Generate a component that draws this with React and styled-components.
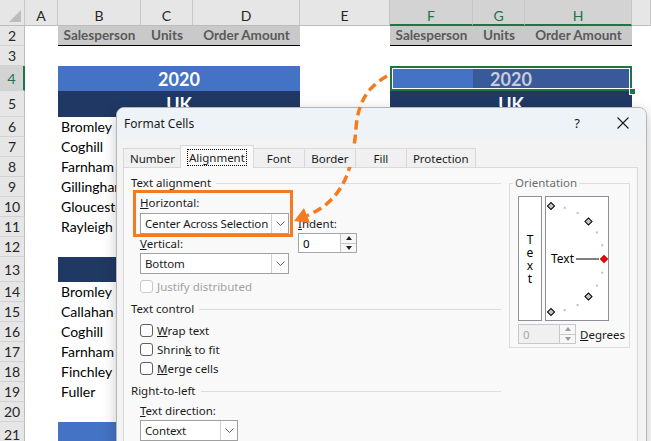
import React from 'react'
import styled, { createGlobalStyle, css } from 'styled-components'

const ORANGE = '#f47b20'
const GREEN = '#217346'

const GlobalStyle = createGlobalStyle`
  html, body { margin: 0; padding: 0; background: #fff; }
  body { width: 651px; height: 441px; overflow: hidden; }
`

const Page = styled.div`
  position: relative;
  width: 651px;
  height: 441px;
  overflow: hidden;
  background: #fff;
`

/* ---------- spreadsheet ---------- */

const Sheet = styled.div`
  display: grid;
  grid-template-columns: 25px 33px 83px 52px 107px 90px 83px 52px 107px 1fr;
  grid-template-rows: 26px 20px 20px 25px 26px repeat(6, 20px) 20px 25px repeat(7, 20px) 26px;
  font-family: Lato, "Liberation Sans", sans-serif;
  font-size: 14px;
  color: #000;
`

const Corner = styled.div`
  position: relative;
  background: #e6e6e6;
  border-right: 1px solid #c6c6c6;
  border-bottom: 1px solid #bdbdbd;
  &::after {
    content: '';
    position: absolute;
    right: 3px;
    bottom: 3px;
    border-style: solid;
    border-width: 0 0 12px 12px;
    border-color: transparent transparent #bcbcbc transparent;
  }
`

const ColHead = styled.div`
  box-sizing: border-box;
  display: flex;
  justify-content: center;
  padding-top: 7px;
  background: #e6e6e6;
  border-right: 1px solid #c6c6c6;
  border-bottom: 1px solid #bdbdbd;
  color: #262626;
  ${p => p.$selected && css`
    background: #d3d3d3;
    color: ${GREEN};
    border-bottom: 2px solid ${GREEN};
  `}
`

const RowHead = styled.div`
  box-sizing: border-box;
  display: flex;
  align-items: center;
  justify-content: center;
  background: #e6e6e6;
  border-right: 1px solid #bdbdbd;
  border-bottom: 1px solid #d2d2d2;
  color: #262626;
  ${p => p.$selected && css`
    background: #d3d3d3;
    color: ${GREEN};
    border-right: 2px solid ${GREEN};
  `}
`

const Cell = styled.div`
  min-width: 0;
`

const HeadCell = styled.div`
  box-sizing: border-box;
  background: #c9c9c9;
  border-bottom: 1px solid #000;
  color: #595959;
  font-weight: 700;
  font-size: 13.5px;
  line-height: 19px;
  text-align: center;
  white-space: nowrap;
`

const NameCell = styled.div`
  padding-left: 3px;
  line-height: 20px;
  white-space: nowrap;
`

const Band = styled.div`
  position: relative;
  grid-column: span 3;
  display: flex;
  align-items: center;
  justify-content: center;
  background: ${p => (p.$tone === 'navy' ? '#203864' : '#4472c4')};
  color: #fff;
  font-weight: 700;
  font-size: 18px;
  ${p => p.$selected && css`
    background: linear-gradient(to right, #4472c4 83px, #3a599b 83px);
    color: #c9cdd6;
    &::after {
      content: '';
      position: absolute;
      inset: 0;
      border: 2px solid ${GREEN};
      box-shadow: inset 0 0 0 1px #fff;
    }
    &::before {
      content: '';
      position: absolute;
      right: -4px;
      bottom: -4px;
      width: 5px;
      height: 5px;
      background: ${GREEN};
      border: 1px solid #fff;
      z-index: 1;
    }
  `}
`

const COLUMNS = ['A', 'B', 'C', 'D', 'E', 'F', 'G', 'H', '']
const SELECTED_COLS = ['F', 'G', 'H']

const ROWS = [
  { n: 2, kind: 'head' },
  { n: 3 },
  { n: 4, kind: 'band', tone: 'blue', text: '2020', selected: true },
  { n: 5, kind: 'band', tone: 'navy', text: 'UK' },
  { n: 6, name: 'Bromley' },
  { n: 7, name: 'Coghill' },
  { n: 8, name: 'Farnham' },
  { n: 9, name: 'Gillingham' },
  { n: 10, name: 'Gloucester' },
  { n: 11, name: 'Rayleigh' },
  { n: 12 },
  { n: 13, kind: 'band', tone: 'navy', text: '' },
  { n: 14, name: 'Bromley' },
  { n: 15, name: 'Callahan' },
  { n: 16, name: 'Coghill' },
  { n: 17, name: 'Farnham' },
  { n: 18, name: 'Finchley' },
  { n: 19, name: 'Fuller' },
  { n: 20 },
  { n: 21, kind: 'band', tone: 'blue', text: '' },
]

const HEADINGS = ['Salesperson', 'Units', 'Order Amount']

function renderCells(row) {
  const k = row.n
  if (row.kind === 'head') {
    return [
      <Cell key={`${k}a`} />,
      ...HEADINGS.map(h => <HeadCell key={`${k}l${h}`}>{h}</HeadCell>),
      <Cell key={`${k}e`} />,
      ...HEADINGS.map(h => <HeadCell key={`${k}r${h}`}>{h}</HeadCell>),
      <Cell key={`${k}i`} />,
    ]
  }
  if (row.kind === 'band') {
    return [
      <Cell key={`${k}a`} />,
      <Band key={`${k}l`} $tone={row.tone}>{row.text}</Band>,
      <Cell key={`${k}e`} />,
      <Band key={`${k}r`} $tone={row.tone} $selected={row.selected}>{row.text}</Band>,
      <Cell key={`${k}i`} />,
    ]
  }
  return COLUMNS.map((c, i) =>
    i === 1 && row.name
      ? <NameCell key={`${k}${i}`}>{row.name}</NameCell>
      : <Cell key={`${k}${i}`} />
  )
}

/* ---------- dialog ---------- */

const Dialog = styled.div`
  position: absolute;
  left: 116px;
  top: 107px;
  width: 531px;
  height: 345px;
  box-sizing: border-box;
  border: 1px solid #b5b5b5;
  border-radius: 8px 8px 0 0;
  background: #f3f3f3;
  box-shadow: 0 4px 14px rgba(0, 0, 0, 0.22);
  font-family: "Noto Sans", "Open Sans", sans-serif;
  font-size: 11.5px;
  color: #1a1a1a;
  overflow: hidden;
`

const TitleBar = styled.div`
  display: flex;
  align-items: center;
  height: 30px;
  background: #eef3f8;
`

const Title = styled.div`
  flex: 1;
  padding-left: 7px;
  font-size: 12px;
`

const TitleButton = styled.div`
  width: 46px;
  height: 30px;
  display: flex;
  align-items: center;
  justify-content: center;
  font-size: 13px;
`

const Tabs = styled.div`
  position: relative;
  z-index: 1;
  display: flex;
  align-items: flex-end;
  height: 22px;
  margin-top: 7px;
  padding-left: 6px;
`

const Tab = styled.div`
  box-sizing: border-box;
  display: flex;
  align-items: center;
  justify-content: center;
  height: 19px;
  min-width: 52px;
  padding: 0 6px;
  margin-right: -1px;
  border: 1px solid #d9d9d9;
  border-bottom: none;
  background: #f0f0f0;
  ${p => p.$active && css`
    height: 23px;
    margin: 0 -1px -1px -1px;
    padding: 0 7px;
    background: #f9f9f9;
    position: relative;
    z-index: 1;
  `}
`

const FocusText = styled.span`
  outline: 1px dotted #000;
  outline-offset: 0;
  padding: 0 1px;
  line-height: 15px;
`

const TabPanel = styled.div`
  box-sizing: border-box;
  width: 515px;
  height: 300px;
  margin-left: 6px;
  padding: 8px 0 0 7px;
  border: 1px solid #d9d9d9;
  background: #f9f9f9;
  display: grid;
  grid-template-columns: 370px 121px;
  column-gap: 8px;
  align-items: start;
`

const Column = styled.div`
  display: flex;
  flex-direction: column;
`

const GroupHeading = styled.div`
  display: flex;
  align-items: center;
  gap: 5px;
  height: 14px;
  line-height: 14px;
  margin-top: ${p => p.$top || 0}px;
  &::after {
    content: '';
    flex: 1;
    height: 1px;
    background: #dcdcdc;
  }
`

const FieldLabel = styled.div`
  height: 14px;
  line-height: 14px;
  white-space: nowrap;
`

const FieldRow = styled.div`
  display: flex;
  align-items: flex-start;
  gap: 9px;
  height: 38px;
  margin-top: 6px;
  margin-left: 9px;
`

const Field = styled.div`
  display: flex;
  flex-direction: column;
  margin-top: ${p => p.$top || 0}px;
  margin-left: ${p => p.$indent || 0}px;
`

const Highlight = styled(Field)`
  position: relative;
  &::after {
    content: '';
    position: absolute;
    left: -7px;
    top: -6px;
    right: -4px;
    bottom: -3px;
    border: 3px solid ${ORANGE};
    pointer-events: none;
  }
`

const ComboBox = styled.div`
  box-sizing: border-box;
  display: flex;
  width: ${p => p.$w}px;
  height: 21px;
  margin-top: ${p => p.$top ?? 3}px;
  border: 1px solid #a0a0a0;
  background: #fff;
`

const ComboText = styled.div`
  flex: 1;
  display: flex;
  align-items: center;
  padding-left: 4px;
  white-space: nowrap;
  overflow: hidden;
  letter-spacing: -0.15px;
`

const ComboButton = styled.div`
  width: 16px;
  display: flex;
  align-items: center;
  justify-content: center;
  border-left: 1px solid #d0d0d0;
  background: #fdfdfd;
`

const SpinBox = styled.div`
  box-sizing: border-box;
  display: flex;
  width: ${p => p.$w}px;
  height: 20px;
  margin-top: ${p => p.$top || 0}px;
  border: 1px solid ${p => (p.$disabled ? '#c8c8c8' : '#a6a6a6')};
  background: ${p => (p.$disabled ? '#f0f0f0' : '#fff')};
  color: ${p => (p.$disabled ? '#a8a8a8' : '#000')};
`

const SpinValue = styled.div`
  flex: 1;
  display: flex;
  align-items: center;
  padding-left: 4px;
`

const SpinButtons = styled.div`
  width: 15px;
  display: flex;
  flex-direction: column;
  border-left: 1px solid #c8c8c8;
  background: #f7f7f7;
`

const SpinHalf = styled.div`
  flex: 1;
  display: flex;
  align-items: center;
  justify-content: center;
  & + & { border-top: 1px solid #c8c8c8; }
  &::after {
    content: '';
    border-left: 3.5px solid transparent;
    border-right: 3.5px solid transparent;
    ${p => (p.$dir === 'up'
      ? css`border-bottom: 4px solid ${p.$disabled ? '#9a9a9a' : '#222'};`
      : css`border-top: 4px solid ${p.$disabled ? '#9a9a9a' : '#222'};`)}
  }
`

const CheckRow = styled.div`
  display: flex;
  align-items: center;
  gap: 4px;
  height: 14px;
  margin-top: ${p => p.$top || 0}px;
  margin-left: 9px;
  color: ${p => (p.$disabled ? '#a2a2a2' : 'inherit')};
`

const CheckSquare = styled.span`
  box-sizing: border-box;
  width: 13px;
  height: 13px;
  border: 1px solid ${p => (p.$disabled ? '#cacaca' : '#5f5f5f')};
  border-radius: 3px;
  background: #fdfdfd;
`

const OrientationGroup = styled.fieldset`
  box-sizing: border-box;
  min-width: 0;
  height: 172px;
  margin: 0;
  padding: 6px 0 0 8px;
  border: 1px solid #dcdcdc;
`

const Legend = styled.legend`
  padding: 0 2px;
  margin-left: -5px;
  line-height: 14px;
  color: #6d6d6d;
`

const OrientationRow = styled.div`
  display: flex;
  gap: 3px;
`

const DialFrame = styled.div`
  box-sizing: border-box;
  width: ${p => p.$w}px;
  height: 125px;
  border: 1px solid #8e9099;
  background: #fff;
`

const VerticalText = styled(DialFrame)`
  display: flex;
  flex-direction: column;
  align-items: center;
  justify-content: center;
  font-size: 12px;
  line-height: 13px;
  color: #000;
`

const DegreesRow = styled.div`
  display: flex;
  align-items: center;
  gap: 4px;
  margin-top: 3px;
`

const Overlay = styled.svg`
  position: absolute;
  left: 0;
  top: 0;
  pointer-events: none;
`

const Chevron = () => (
  <svg width="9" height="5" viewBox="0 0 9 5">
    <polyline points="0.5,0.5 4.5,4.5 8.5,0.5" fill="none" stroke="#606060" strokeWidth="1" />
  </svg>
)

const Combo = ({ w, top, children }) => (
  <ComboBox $w={w} $top={top}>
    <ComboText>{children}</ComboText>
    <ComboButton><Chevron /></ComboButton>
  </ComboBox>
)

const Spinner = ({ w, top, disabled, value }) => (
  <SpinBox $w={w} $top={top} $disabled={disabled}>
    <SpinValue>{value}</SpinValue>
    <SpinButtons>
      <SpinHalf $dir="up" $disabled={disabled} />
      <SpinHalf $dir="down" $disabled={disabled} />
    </SpinButtons>
  </SpinBox>
)

const Check = ({ top, disabled, children }) => (
  <CheckRow $top={top} $disabled={disabled}>
    <CheckSquare $disabled={disabled} />
    <span>{children}</span>
  </CheckRow>
)

const Diamond = ({ x, y, red }) => (
  <rect
    x={x - 2.5}
    y={y - 2.5}
    width="5"
    height="5"
    transform={`rotate(45 ${x} ${y})`}
    fill={red ? '#ff0000' : '#c4c4c4'}
    stroke={red ? '#c00000' : '#000'}
    strokeWidth="1"
  />
)

const Dial = () => {
  const cx = 5
  const cy = 62
  const r = 53
  const marks = []
  for (let a = 90; a >= -90; a -= 15) {
    const rad = (a * Math.PI) / 180
    const x = cx + r * Math.cos(rad)
    const y = cy - r * Math.sin(rad)
    if (a % 45 === 0) marks.push(<Diamond key={a} x={x} y={y} red={a === 0} />)
    else marks.push(<rect key={a} x={x - 1} y={y - 1} width="2" height="2" fill="#c0c0c0" />)
  }
  return (
    <svg width="62" height="123" viewBox="0 0 62 123">
      <text x="5" y="66" fontFamily="Noto Sans, sans-serif" fontSize="12" fill="#000">Text</text>
      <line x1="30" y1="62" x2="53" y2="62" stroke="#000" strokeWidth="1" />
      {marks}
    </svg>
  )
}

const CloseIcon = () => (
  <svg width="12" height="12" viewBox="0 0 12 12">
    <path d="M0.5 0.5 L11.5 11.5 M11.5 0.5 L0.5 11.5" stroke="#1a1a1a" strokeWidth="1.1" />
  </svg>
)

const TAB_NAMES = ['Number', 'Alignment', 'Font', 'Border', 'Fill', 'Protection']

const FormatCellsDialog = () => (
  <Dialog>
    <TitleBar>
      <Title>Format Cells</Title>
      <TitleButton>?</TitleButton>
      <TitleButton><CloseIcon /></TitleButton>
    </TitleBar>
    <Tabs>
      {TAB_NAMES.map(t => (
        <Tab key={t} $active={t === 'Alignment'}>
          {t === 'Alignment' ? <FocusText>{t}</FocusText> : t}
        </Tab>
      ))}
    </Tabs>
    <TabPanel>
      <Column>
        <GroupHeading>Text alignment</GroupHeading>
        <FieldRow>
          <Highlight>
            <FieldLabel><u>H</u>orizontal:</FieldLabel>
            <Combo w={149}>Center Across Selection</Combo>
          </Highlight>
          <Field $top={21}>
            <FieldLabel><u>I</u>ndent:</FieldLabel>
            <Spinner w={59} top={2} value="0" />
          </Field>
        </FieldRow>
        <Field $top={3} $indent={9}>
          <FieldLabel><u>V</u>ertical:</FieldLabel>
          <Combo w={149} top={2}>Bottom</Combo>
        </Field>
        <Check top={5} disabled>Justify distributed</Check>

        <GroupHeading $top={9}>Text control</GroupHeading>
        <Check top={7}><u>W</u>rap text</Check>
        <Check top={5}>Shrin<u>k</u> to fit</Check>
        <Check top={5}><u>M</u>erge cells</Check>

        <GroupHeading $top={9}>Right-to-left</GroupHeading>
        <Field $top={6} $indent={9}>
          <FieldLabel><u>T</u>ext direction:</FieldLabel>
          <Combo w={98} top={2}>Context</Combo>
        </Field>
      </Column>

      <OrientationGroup>
        <Legend>Orientation</Legend>
        <OrientationRow>
          <VerticalText $w={24}>
            <span>T</span>
            <span>e</span>
            <span>x</span>
            <span>t</span>
          </VerticalText>
          <DialFrame $w={64}><Dial /></DialFrame>
        </OrientationRow>
        <DegreesRow>
          <Spinner w={58} disabled value="0" />
          <span><u>D</u>egrees</span>
        </DegreesRow>
      </OrientationGroup>
    </TabPanel>
  </Dialog>
)

const PointerArrow = () => (
  <Overlay width="651" height="441" viewBox="0 0 651 441">
    <path
      d="M387 76 C366 88 358 104 356 128 C353 165 346 200 306 216"
      fill="none"
      stroke={ORANGE}
      strokeWidth="3.5"
      strokeDasharray="9 5"
    />
    <polygon points="294,221 304,208 310,223" fill={ORANGE} />
  </Overlay>
)

export default function App() {
  return (
    <Page>
      <GlobalStyle />
      <Sheet>
        <Corner />
        {COLUMNS.map((c, i) => (
          <ColHead key={`h${i}`} $selected={SELECTED_COLS.includes(c)}>{c}</ColHead>
        ))}
        {ROWS.map(row => (
          <React.Fragment key={row.n}>
            <RowHead $selected={row.selected}>{row.n}</RowHead>
            {renderCells(row)}
          </React.Fragment>
        ))}
      </Sheet>
      <FormatCellsDialog />
      <PointerArrow />
    </Page>
  )
}
